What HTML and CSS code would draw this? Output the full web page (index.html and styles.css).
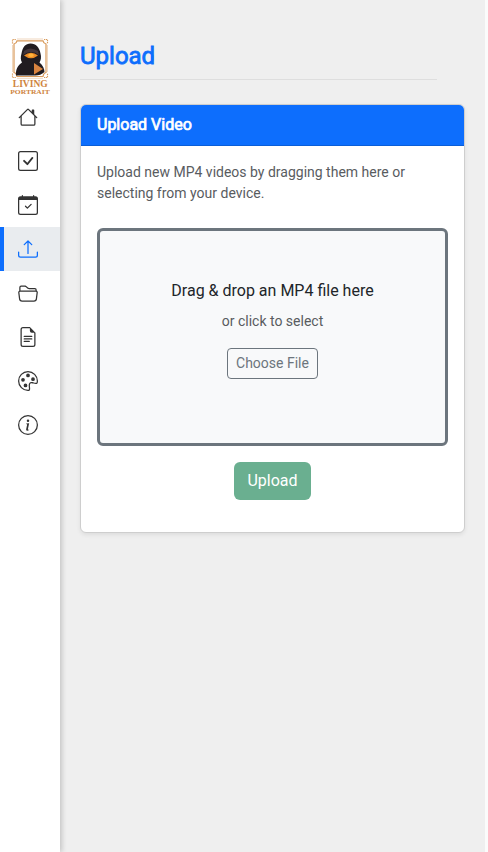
FILE: index.html
```
<!DOCTYPE html>
<html lang="en">
<head>
<meta charset="utf-8">
<title>Upload</title>
<link rel="stylesheet" href="styles.css">
</head>
<body>
<div class="app">
  <nav class="sidebar">
    <svg class="logo" viewBox="0 0 40 57" role="img" aria-label="Living Portrait">
      <g fill="none" stroke="#d99a5a">
        <path stroke-width="1.200" d="M7 2.800H33Q33.500 5.500 36 6V34.500Q33.500 35 33 38.500H7Q6.500 35 4 34.500V6Q6.500 5.500 7 2.800Z"/>
        <path stroke-width=".6" stroke="#e6bd94" d="M7 1H33M2.500 7V34M37.500 7V34M7 40.300H33"/>
        <path stroke-width="1.200" stroke-dasharray="1.300 .7" d="M2.500 5.500V1.500H6M34 1.500H37.500V5.500M2.500 35.500V39.500H6M34 39.500H37.500V35.500"/>
      </g>
      <path fill="#211c20" d="M6 37.500C5.500 32 7.500 27.500 12 24.500C10.500 22 10.500 19 11.500 15.500C12.500 9 15.500 5.500 20.500 5.500C26 5.500 29.500 9.500 30.500 15.500C31.500 19 31 22 29.500 24.500C33 27.500 34.500 31 34.500 34Q30 38 24 37.500Z"/>
      <path fill="#44363b" d="M14 13Q20 8 28 13L29 17Q21 11 13 17Z"/>
      <path fill="#ed8b25" d="M14 17.500Q21 12 28 17.500Q21 23 14 17.500Z"/>
      <ellipse cx="21" cy="17.200" rx="2.800" ry="1.700" fill="#ffb43c"/>
      <path fill="#d98440" d="M24 25L33 31L24 36.500Z"/>
      <g fill="#cf8440" font-family="Liberation Serif, serif" text-anchor="middle">
        <text x="20.300" y="49.200" font-size="9.400" font-weight="700" textLength="35" lengthAdjust="spacingAndGlyphs">LIVING</text>
        <text x="20" y="56.300" font-size="7" font-weight="700" textLength="39.500" lengthAdjust="spacingAndGlyphs">PORTRAIT</text>
      </g>
    </svg>
    <a class="item"><svg viewBox="0 0 16 16"><path d="M8.707 1.500a1 1 0 0 0-1.414 0L.646 8.146a.5.5 0 0 0 .708.708L2 8.207V13.500A1.500 1.500 0 0 0 3.500 15h9a1.500 1.500 0 0 0 1.500-1.500V8.207l.646.647a.5.5 0 0 0 .708-.708L13 5.793V2.500a.5.5 0 0 0-.5-.5h-1a.5.5 0 0 0-.5.5v1.293zM13 7.207V13.500a.5.5 0 0 1-.5.5h-9a.5.5 0 0 1-.5-.5V7.207l5-5z"/></svg></a>
    <a class="item"><svg viewBox="0 0 16 16"><path d="M14 1a1 1 0 0 1 1 1v12a1 1 0 0 1-1 1H2a1 1 0 0 1-1-1V2a1 1 0 0 1 1-1zM2 0a2 2 0 0 0-2 2v12a2 2 0 0 0 2 2h12a2 2 0 0 0 2-2V2a2 2 0 0 0-2-2z"/><path d="M10.970 4.970a.75.75 0 0 1 1.070 1.050l-3.990 4.990a.75.75 0 0 1-1.080.02L4.324 8.384a.75.75 0 1 1 1.060-1.060l2.094 2.093 3.473-4.425z"/></svg></a>
    <a class="item"><svg viewBox="0 0 16 16"><path d="M10.854 7.146a.5.5 0 0 1 0 .708l-3 3a.5.5 0 0 1-.708 0l-1.500-1.500a.5.5 0 1 1 .708-.708L7.500 9.793l2.646-2.647a.5.5 0 0 1 .708 0"/><path d="M3.500 0a.5.5 0 0 1 .5.5V1h8V.5a.5.5 0 0 1 1 0V1h1a2 2 0 0 1 2 2v11a2 2 0 0 1-2 2H2a2 2 0 0 1-2-2V3a2 2 0 0 1 2-2h1V.5a.5.5 0 0 1 .5-.5M1 4v10a1 1 0 0 0 1 1h12a1 1 0 0 0 1-1V4z"/></svg></a>
    <a class="item active"><svg viewBox="0 0 16 16"><path d="M.5 9.900a.5.5 0 0 1 .5.5v2.500a1 1 0 0 0 1 1h12a1 1 0 0 0 1-1v-2.500a.5.5 0 0 1 1 0v2.500a2 2 0 0 1-2 2H2a2 2 0 0 1-2-2v-2.500a.5.5 0 0 1 .5-.5"/><path d="M7.646 1.146a.5.5 0 0 1 .708 0l3 3a.5.5 0 0 1-.708.708L8.500 2.707V11.500a.5.5 0 0 1-1 0V2.707L5.354 4.854a.5.5 0 1 1-.708-.708z"/></svg></a>
    <a class="item"><svg viewBox="0 0 16 16"><path d="M1 3.500A1.500 1.500 0 0 1 2.500 2h2.764c.958 0 1.760.56 2.311 1.184C7.985 3.648 8.480 4 9 4h4.500A1.500 1.500 0 0 1 15 5.500v.640c.57.265.940.876.856 1.546l-.640 5.124A2.500 2.500 0 0 1 12.733 15H3.266a2.500 2.500 0 0 1-2.481-2.190l-.640-5.124A1.500 1.500 0 0 1 1 6.140zM2 6h12v-.5a.5.5 0 0 0-.5-.5H9c-.964 0-1.710-.629-2.174-1.154C6.374 3.334 5.820 3 5.264 3H2.500a.5.5 0 0 0-.5.5zm-.367 1a.5.5 0 0 0-.496.562l.640 5.124A1.500 1.500 0 0 0 3.266 14h9.468a1.500 1.500 0 0 0 1.489-1.314l.640-5.124A.5.5 0 0 0 14.367 7z"/></svg></a>
    <a class="item"><svg viewBox="0 0 16 16"><path d="M5 7a.5.5 0 0 0 0 1h6a.5.5 0 0 0 0-1zm-.5 2.500A.5.5 0 0 1 5 9h6a.5.5 0 0 1 0 1H5a.5.5 0 0 1-.5-.5m0 2A.5.5 0 0 1 5 11h4a.5.5 0 0 1 0 1H5a.5.5 0 0 1-.5-.5"/><path d="M9.500 0H4a2 2 0 0 0-2 2v12a2 2 0 0 0 2 2h8a2 2 0 0 0 2-2V4.500zm0 1v2A1.500 1.500 0 0 0 11 4.500h2V14a1 1 0 0 1-1 1H4a1 1 0 0 1-1-1V2a1 1 0 0 1 1-1z"/></svg></a>
    <a class="item"><svg viewBox="0 0 16 16"><path d="M8 5a1.500 1.500 0 1 0 0-3 1.500 1.500 0 0 0 0 3m4 3a1.500 1.500 0 1 0 0-3 1.500 1.500 0 0 0 0 3M5.500 7a1.500 1.500 0 1 1-3 0 1.500 1.500 0 0 1 3 0m.5 6a1.500 1.500 0 1 0 0-3 1.500 1.500 0 0 0 0 3"/><path d="M16 8c0 3.150-1.866 2.585-3.567 2.070C11.420 9.763 10.465 9.473 10 10c-.603.683-.475 1.819-.351 2.920C9.826 14.495 9.996 16 8 16a8 8 0 1 1 8-8m-8 7c.611 0 .654-.171.655-.176.078-.146.124-.464.070-1.119-.014-.168-.037-.370-.061-.591-.052-.464-.112-1.005-.118-1.462-.010-.707.083-1.610.704-2.314.369-.417.845-.578 1.272-.618.404-.038.812.026 1.160.104.343.077.702.186 1.025.284l.028.008c.346.105.658.199.953.266.653.148.904.083.991.024C14.717 9.380 15 9.161 15 8a7 7 0 1 0-7 7"/></svg></a>
    <a class="item"><svg viewBox="0 0 16 16"><path d="M8 15A7 7 0 1 1 8 1a7 7 0 0 1 0 14m0 1A8 8 0 1 0 8 0a8 8 0 0 0 0 16"/><path d="m8.930 6.588-2.290.287-.082.380.450.083c.294.070.352.176.288.469l-.738 3.468c-.194.897.105 1.319.808 1.319.545 0 1.178-.252 1.465-.598l.088-.416c-.2.176-.492.246-.686.246-.275 0-.375-.193-.304-.533zM9 4.500a1 1 0 1 1-2 0 1 1 0 0 1 2 0"/></svg></a>
  </nav>
  <main class="content">
    <h1 class="title">Upload</h1>
    <section class="card">
      <h2 class="card-header">Upload Video</h2>
      <div class="card-body">
        <p class="intro">Upload new MP4 videos by dragging them here or selecting from your device.</p>
        <div class="dropzone">
          <p class="drop-title">Drag &amp; drop an MP4 file here</p>
          <p class="drop-hint">or click to select</p>
          <button class="choose">Choose File</button>
        </div>
        <button class="submit">Upload</button>
      </div>
    </section>
  </main>
</div>
</body>
</html>
```

FILE: styles.css
```
* { box-sizing: border-box; }
html { background: #fbfbfb; }
body {
  margin: 0;
  font: 400 16px/24px Roboto, sans-serif;
  color: #212529;
}
h1, h2, p { margin: 0; }
button { font-family: inherit; }
.app {
  display: flex;
  width: 485px;
  height: 852px;
  background: #efefef;
}
.sidebar {
  flex: none;
  width: 60px;
  padding-top: 38px;
  background: #fff;
  box-shadow: 2px 0 5px rgba(0, 0, 0, .18);
}
.logo {
  display: block;
  width: 40px;
  height: 57px;
  margin: 0 auto;
  overflow: visible;
}
.item {
  display: flex;
  align-items: center;
  height: 44px;
  padding-left: 14px;
  border-left: 4px solid transparent;
  color: #333;
}
.item svg { width: 20px; height: 20px; fill: currentColor; }
.item.active {
  background: #e9ecef;
  border-left-color: #0d6efd;
  color: #0d6efd;
}
.content { flex: 1; padding: 40px 20px 0; }
.title {
  width: 357px;
  height: 40px;
  margin-bottom: 24px;
  border-bottom: 1px solid #dedede;
  font-size: 24px;
  font-weight: 400;
  line-height: 32px;
  color: #0d6efd;
  -webkit-text-stroke: .8px #0d6efd;
}
.card {
  height: 429px;
  border: 1px solid #cecece;
  border-radius: 6px;
  background: #fff;
  box-shadow: 0 2px 4px rgba(0, 0, 0, .075);
  overflow: hidden;
}
.card-header {
  height: 41px;
  padding-left: 16px;
  border-bottom: 1px solid #0b5ed7;
  background: #0d6efd;
  font-size: 16px;
  font-weight: 400;
  line-height: 40px;
  color: #fff;
  -webkit-text-stroke: .7px #fff;
}
.card-body {
  display: flex;
  flex-direction: column;
  align-items: center;
  padding: 16px;
}
.intro {
  margin-bottom: 24px;
  font-size: 14px;
  line-height: 21px;
  color: #595c5f;
}
.dropzone {
  display: flex;
  flex-direction: column;
  align-items: center;
  width: 100%;
  height: 218px;
  padding-top: 48px;
  border: 3px solid #6c757d;
  border-radius: 6px;
  background: #f8f9fa;
}
.drop-title { margin-bottom: 8px; }
.drop-hint {
  margin-bottom: 16px;
  font-size: 14px;
  line-height: 21px;
  color: #595c5f;
}
.choose {
  height: 31px;
  padding: 4px 8px;
  border: 1px solid #6c757d;
  border-radius: 4px;
  background: transparent;
  font-size: 14px;
  line-height: 21px;
  color: #6c757d;
}
.submit {
  height: 38px;
  margin-top: 16px;
  padding: 6px 13px;
  border: 0;
  border-radius: 6px;
  background: #6aaf90;
  font-size: 16px;
  line-height: 24px;
  color: #fff;
}
```
